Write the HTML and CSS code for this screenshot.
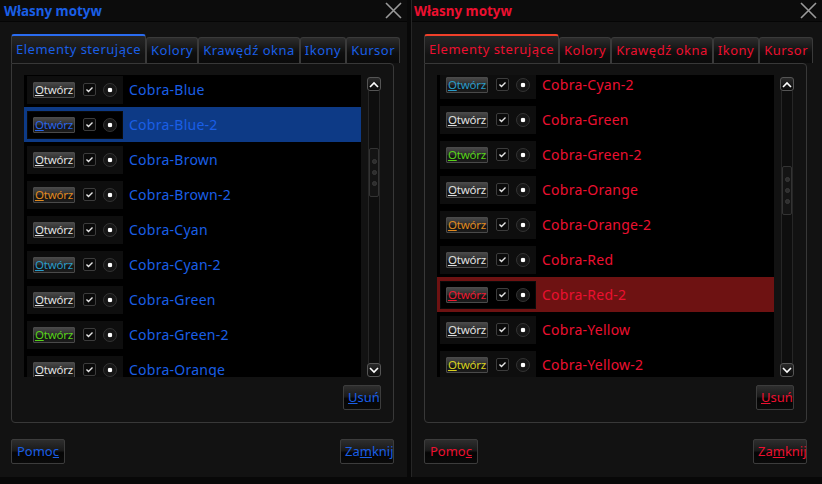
FILE: index.html
```html
<!DOCTYPE html>
<html lang="pl">
<head>
  <meta charset="UTF-8" />
  <title>Własny motyw</title>
  <link rel="stylesheet" href="styles.css">
</head>
<body>
  <div class="dialog blue">
    <div class="titlebar">
      <span class="title">Własny motyw</span>
      <svg class="close" width="17" height="17" viewBox="0 0 17 17"><path d="M1 1L16 16M16 1L1 16" stroke="#9a9a9a" stroke-width="1.6"/></svg>
    </div>
    <div class="content">
      <div class="tabs">
        <div class="tab active">Elementy sterujące</div>
        <div class="tab">Kolory</div>
        <div class="tab">Krawędź okna</div>
        <div class="tab">Ikony</div>
        <div class="tab">Kursor</div>
      </div>
      <div class="frame">
        <div class="list-wrap">
          <div class="list">
            <div class="rows">
              <div class="row"><div class="cell"><span class="open"><u>O</u>twórz</span><span class="check"></span><span class="radio"></span></div><span class="name">Cobra-Blue</span></div>
              <div class="row selected"><div class="cell"><span class="open c-blue"><u>O</u>twórz</span><span class="check"></span><span class="radio"></span></div><span class="name">Cobra-Blue-2</span></div>
              <div class="row"><div class="cell"><span class="open"><u>O</u>twórz</span><span class="check"></span><span class="radio"></span></div><span class="name">Cobra-Brown</span></div>
              <div class="row"><div class="cell"><span class="open c-orange"><u>O</u>twórz</span><span class="check"></span><span class="radio"></span></div><span class="name">Cobra-Brown-2</span></div>
              <div class="row"><div class="cell"><span class="open"><u>O</u>twórz</span><span class="check"></span><span class="radio"></span></div><span class="name">Cobra-Cyan</span></div>
              <div class="row"><div class="cell"><span class="open c-cyan"><u>O</u>twórz</span><span class="check"></span><span class="radio"></span></div><span class="name">Cobra-Cyan-2</span></div>
              <div class="row"><div class="cell"><span class="open"><u>O</u>twórz</span><span class="check"></span><span class="radio"></span></div><span class="name">Cobra-Green</span></div>
              <div class="row"><div class="cell"><span class="open c-green"><u>O</u>twórz</span><span class="check"></span><span class="radio"></span></div><span class="name">Cobra-Green-2</span></div>
              <div class="row"><div class="cell"><span class="open"><u>O</u>twórz</span><span class="check"></span><span class="radio"></span></div><span class="name">Cobra-Orange</span></div>
            </div>
          </div>
          <div class="scrollbar">
            <div class="arrow"><svg width="10" height="7" viewBox="0 0 10 7"><path d="M1 6L5 2L9 6" fill="none" stroke="#fff" stroke-width="1.6"/></svg></div>
            <div class="track top-blue"><div class="thumb"><i></i><i></i><i></i></div></div>
            <div class="arrow"><svg width="10" height="7" viewBox="0 0 10 7"><path d="M1 1L5 5L9 1" fill="none" stroke="#fff" stroke-width="1.6"/></svg></div>
          </div>
        </div>
        <div class="frame-foot"><span class="btn small"><u>U</u>suń</span></div>
      </div>
      <div class="actions">
        <span class="btn">Pomo<u>c</u></span>
        <span class="btn">Za<u>m</u>knij</span>
      </div>
    </div>
  </div>

  <div class="dialog red">
    <div class="titlebar">
      <span class="title">Własny motyw</span>
      <svg class="close" width="17" height="17" viewBox="0 0 17 17"><path d="M1 1L16 16M16 1L1 16" stroke="#9a9a9a" stroke-width="1.6"/></svg>
    </div>
    <div class="content">
      <div class="tabs">
        <div class="tab active">Elementy sterujące</div>
        <div class="tab">Kolory</div>
        <div class="tab">Krawędź okna</div>
        <div class="tab">Ikony</div>
        <div class="tab">Kursor</div>
      </div>
      <div class="frame">
        <div class="list-wrap">
          <div class="list">
            <div class="rows scrolled">
              <div class="row"><div class="cell"><span class="open c-cyan"><u>O</u>twórz</span><span class="check"></span><span class="radio"></span></div><span class="name">Cobra-Cyan-2</span></div>
              <div class="row"><div class="cell"><span class="open"><u>O</u>twórz</span><span class="check"></span><span class="radio"></span></div><span class="name">Cobra-Green</span></div>
              <div class="row"><div class="cell"><span class="open c-green"><u>O</u>twórz</span><span class="check"></span><span class="radio"></span></div><span class="name">Cobra-Green-2</span></div>
              <div class="row"><div class="cell"><span class="open"><u>O</u>twórz</span><span class="check"></span><span class="radio"></span></div><span class="name">Cobra-Orange</span></div>
              <div class="row"><div class="cell"><span class="open c-orange"><u>O</u>twórz</span><span class="check"></span><span class="radio"></span></div><span class="name">Cobra-Orange-2</span></div>
              <div class="row"><div class="cell"><span class="open"><u>O</u>twórz</span><span class="check"></span><span class="radio"></span></div><span class="name">Cobra-Red</span></div>
              <div class="row selected"><div class="cell"><span class="open c-red"><u>O</u>twórz</span><span class="check"></span><span class="radio"></span></div><span class="name">Cobra-Red-2</span></div>
              <div class="row"><div class="cell"><span class="open"><u>O</u>twórz</span><span class="check"></span><span class="radio"></span></div><span class="name">Cobra-Yellow</span></div>
              <div class="row"><div class="cell"><span class="open c-yellow"><u>O</u>twórz</span><span class="check"></span><span class="radio"></span></div><span class="name">Cobra-Yellow-2</span></div>
            </div>
          </div>
          <div class="scrollbar">
            <div class="arrow"><svg width="10" height="7" viewBox="0 0 10 7"><path d="M1 6L5 2L9 6" fill="none" stroke="#fff" stroke-width="1.6"/></svg></div>
            <div class="track top-red"><div class="thumb"><i></i><i></i><i></i></div></div>
            <div class="arrow"><svg width="10" height="7" viewBox="0 0 10 7"><path d="M1 1L5 5L9 1" fill="none" stroke="#fff" stroke-width="1.6"/></svg></div>
          </div>
        </div>
        <div class="frame-foot"><span class="btn small"><u>U</u>suń</span></div>
      </div>
      <div class="actions">
        <span class="btn">Pomo<u>c</u></span>
        <span class="btn">Za<u>m</u>knij</span>
      </div>
    </div>
  </div>
</body>
</html>
```

FILE: styles.css
```css
* {
  box-sizing: border-box;
}
body {
  margin: 0;
  width: 822px;
  height: 484px;
  background: #080808;
  font-family: "Noto Sans", sans-serif;
  display: flex;
  gap: 4px;
  overflow: hidden;
}
.dialog {
  width: 407px;
  height: 477px;
  background: #121212;
  display: flex;
  flex-direction: column;
}
.dialog.red {
  width: 411px;
  border-left: 1px solid #262626;
}
.blue { --accent: #1a5fe6; --sel: #0d3a86; --tabline: #2a6cf0; }
.red { --accent: #ec1030; --sel: #6e1212; --tabline: #f0402a; }

.titlebar {
  height: 22px;
  background: #0c0c0c;
  border-bottom: 1px solid #050505;
  display: flex;
  align-items: center;
  justify-content: space-between;
  padding: 0 4px 0 4px;
}
.red .titlebar { padding-left: 2px; }
.title {
  color: var(--accent);
  font-weight: bold;
  font-size: 13.4px;
}
.close { margin-right: 1px; }

.content {
  padding: 12px 13px 0 11px;
}
.red .content { padding-left: 12px; padding-right: 15px; }

.tabs {
  display: flex;
  align-items: flex-end;
  height: 29px;
}
.tab {
  height: 26px;
  padding: 0 4px;
  border: 1px solid #3a3a3a;
  border-bottom: none;
  border-radius: 3px 3px 0 0;
  background: linear-gradient(#2c2c2c, #0e0e0e 60%, #0a0a0a);
  color: var(--accent);
  font-size: 13px;
  letter-spacing: 0.5px;
  line-height: 25px;
  white-space: nowrap;
}
.tab.active {
  height: 29px;
  border-top: 2px solid var(--tabline);
  line-height: 26px;
  background: linear-gradient(#262626, #131313 70%);
}

.frame {
  height: 360px;
  border: 1px solid #383838;
  border-radius: 0 4px 4px 4px;
  padding: 11px 12px 0 12px;
}
.list-wrap {
  display: flex;
  gap: 6px;
}
.list {
  width: 338px;
  height: 302px;
  background: #000;
  overflow: hidden;
}
.rows { margin-top: -3px; }
.rows.scrolled { margin-top: -8px; }
.row {
  height: 35px;
  display: flex;
  align-items: center;
}
.row.selected { background: var(--sel); }
.cell {
  margin-left: 3px;
  width: 96px;
  height: 28px;
  background: #0e0e0e;
  display: flex;
  align-items: center;
}
.selected .cell {
  background: #000;
  border: 1px solid #0a0a0a;
}
.selected .cell .open { margin-left: 5px; }
.open {
  margin-left: 6px;
  width: 42px;
  height: 16px;
  border: 1px solid #4a4a4a;
  border-radius: 1px;
  background: linear-gradient(#484848, #2a2a2a 50%, #141414 55%, #1c1c1c);
  color: #e0e0e0;
  font-size: 11.5px;
  line-height: 14px;
  text-align: center;
  letter-spacing: -0.2px;
}
.open.c-blue { color: #2a66e8; }
.open.c-orange { color: #e08a20; }
.open.c-cyan { color: #2a9cc8; }
.open.c-green { color: #58d21a; }
.open.c-red { color: #ee1a30; }
.open.c-yellow { color: #d8d020; }
.check {
  margin-left: 8px;
  width: 13px;
  height: 13px;
  border: 1px solid #3c3c3c;
  border-radius: 2px;
  background: #0a0a0a url("data:image/svg+xml,%3Csvg xmlns='http://www.w3.org/2000/svg' width='11' height='11'%3E%3Cpath d='M2.5 5.5L4.5 7.5L8.5 3.5' fill='none' stroke='%23e8e8e8' stroke-width='1.4'/%3E%3C/svg%3E") center no-repeat;
}
.radio {
  margin-left: 7px;
  width: 14px;
  height: 14px;
  border: 1px solid #333;
  border-radius: 50%;
  background: radial-gradient(circle, #fff 0 2px, #161616 2.6px);
}
.name {
  margin-left: 6px;
  color: var(--accent);
  font-size: 14px;
  letter-spacing: 0.25px;
}

.scrollbar {
  width: 14px;
  height: 300px;
  margin-top: 2px;
  display: flex;
  flex-direction: column;
}
.arrow {
  height: 14px;
  border: 1px solid #555;
  border-radius: 3px;
  background: linear-gradient(#2a2a2a, #0a0a0a);
  display: flex;
  align-items: center;
  justify-content: center;
}
.track {
  flex: 1;
  margin: 0 1px;
  border-left: 1px solid #262626;
  border-right: 1px solid #262626;
  background: #0e0e0e;
}
.track.top-blue { padding-top: 57px; }
.track.top-red { padding-top: 75px; }
.thumb {
  height: 49px;
  border: 1px solid #333;
  border-radius: 2px;
  background: #141414;
  display: flex;
  flex-direction: column;
  align-items: center;
  justify-content: center;
  gap: 6px;
}
.thumb i {
  width: 5px;
  height: 5px;
  border-radius: 50%;
  background: #2e2e2e;
  border: 1px solid #3a3a3a;
}

.frame-foot {
  display: flex;
  justify-content: flex-end;
  margin-top: 8px;
}
.btn {
  height: 25px;
  padding: 0 4px;
  border: 1px solid #3c3c3c;
  border-radius: 2px;
  background: linear-gradient(#2e2e2e, #1a1a1a 45%, #050505 55%, #0a0a0a);
  color: var(--accent);
  font-size: 13px;
  line-height: 23px;
  text-align: center;
}
.btn.small { width: 38px; }
.actions {
  display: flex;
  justify-content: space-between;
  margin-top: 16px;
}
.actions .btn { width: 54px; }
```
